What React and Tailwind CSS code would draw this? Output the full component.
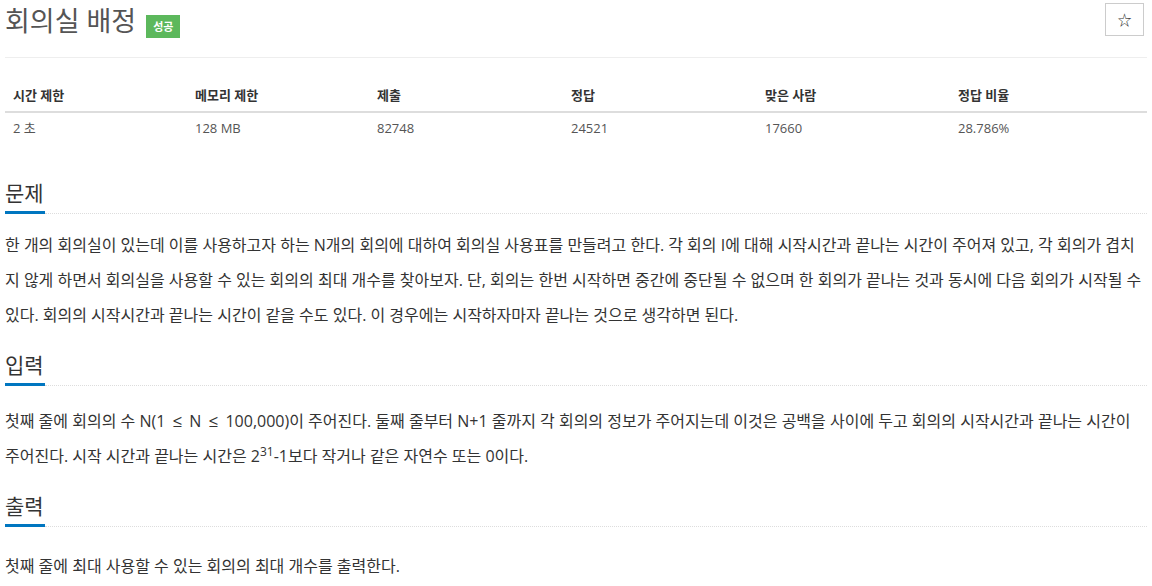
import { useState } from "react";

const stats = [
  { label: "시간 제한", value: "2 초" },
  { label: "메모리 제한", value: "128 MB" },
  { label: "제출", value: "82748" },
  { label: "정답", value: "24521" },
  { label: "맞은 사람", value: "17660" },
  { label: "정답 비율", value: "28.786%" },
];

const SectionTitle = ({ children }) => (
  <div>
    <h2 className="text-[21px] leading-[30px] text-[#333]">{children}</h2>
    <div className="flex items-end mt-[3px]">
      <div className="w-[40px] h-[3px] bg-[#0076c0]" />
      <div className="flex-1 border-b border-dotted border-[#ddd]" />
    </div>
  </div>
);

const App = () => {
  const [starred, setStarred] = useState(false);

  return (
    <div className="min-h-screen bg-white px-[5px] font-['Open_Sans','Noto_Sans_CJK_KR',sans-serif] text-[#333]">
      {/* Title */}
      <div className="flex items-start border-b border-[#eee] h-[58px]">
        <h1 className="mt-[5px] text-[27px] leading-[32px] text-[#555]">회의실 배정</h1>
        <span className="ml-[10px] mt-[15px] h-[23px] px-[7px] bg-[#5cb85c] text-white text-[11px] font-bold leading-[23px]">
          성공
        </span>
        <button
          onClick={() => setStarred(!starred)}
          className="ml-auto mr-[3px] mt-[3px] w-[39px] h-[33px] border border-[#ccc] bg-white text-[14px] text-[#333] leading-none"
        >
          {starred ? "★" : "☆"}
        </button>
      </div>

      {/* Stats table */}
      <div className="mt-[23px] grid grid-cols-[182px_182px_194px_194px_193px_1fr] text-[13px]">
        {stats.map((s) => (
          <div key={s.label} className="h-[32px] px-2 flex items-center font-bold border-b-2 border-[#ddd]">
            {s.label}
          </div>
        ))}
        {stats.map((s) => (
          <div key={s.label} className="h-[32px] px-2 flex items-center text-[#555]">
            {s.value}
          </div>
        ))}
      </div>

      {/* 문제 */}
      <div className="mt-[33px]">
        <SectionTitle>문제</SectionTitle>
        <p className="mt-[14px] text-[16px] leading-[35px]">
          한 개의 회의실이 있는데 이를 사용하고자 하는 N개의 회의에 대하여 회의실 사용표를 만들려고 한다. 각 회의 I에 대해 시작시간과 끝나는 시간이 주어져 있고, 각 회의가 겹치지 않게 하면서 회의실을 사용할 수 있는 회의의 최대 개수를 찾아보자. 단, 회의는 한번 시작하면 중간에 중단될 수 없으며 한 회의가 끝나는 것과 동시에 다음 회의가 시작될 수 있다. 회의의 시작시간과 끝나는 시간이 같을 수도 있다. 이 경우에는 시작하자마자 끝나는 것으로 생각하면 된다.
        </p>
      </div>

      {/* 입력 */}
      <div className="mt-[17px]">
        <SectionTitle>입력</SectionTitle>
        <p className="mt-[18px] text-[16px] leading-[35px]">
          첫째 줄에 회의의 수 N(1 <span className="mx-[3px] text-[17px] leading-none">≤</span> N <span className="mx-[3px] text-[17px] leading-none">≤</span> 100,000)이 주어진다. 둘째 줄부터 N+1 줄까지 각 회의의 정보가 주어지는데 이것은 공백을 사이에 두고 회의의 시작시간과 끝나는 시간이 주어진다. 시작 시간과 끝나는 시간은 2<sup className="leading-none">31</sup>-1보다 작거나 같은 자연수 또는 0이다.
        </p>
      </div>

      {/* 출력 */}
      <div className="mt-[17px]">
        <SectionTitle>출력</SectionTitle>
        <p className="mt-[22px] text-[16px] leading-[35px]">첫째 줄에 최대 사용할 수 있는 회의의 최대 개수를 출력한다.</p>
      </div>
    </div>
  );
};

export default App;
